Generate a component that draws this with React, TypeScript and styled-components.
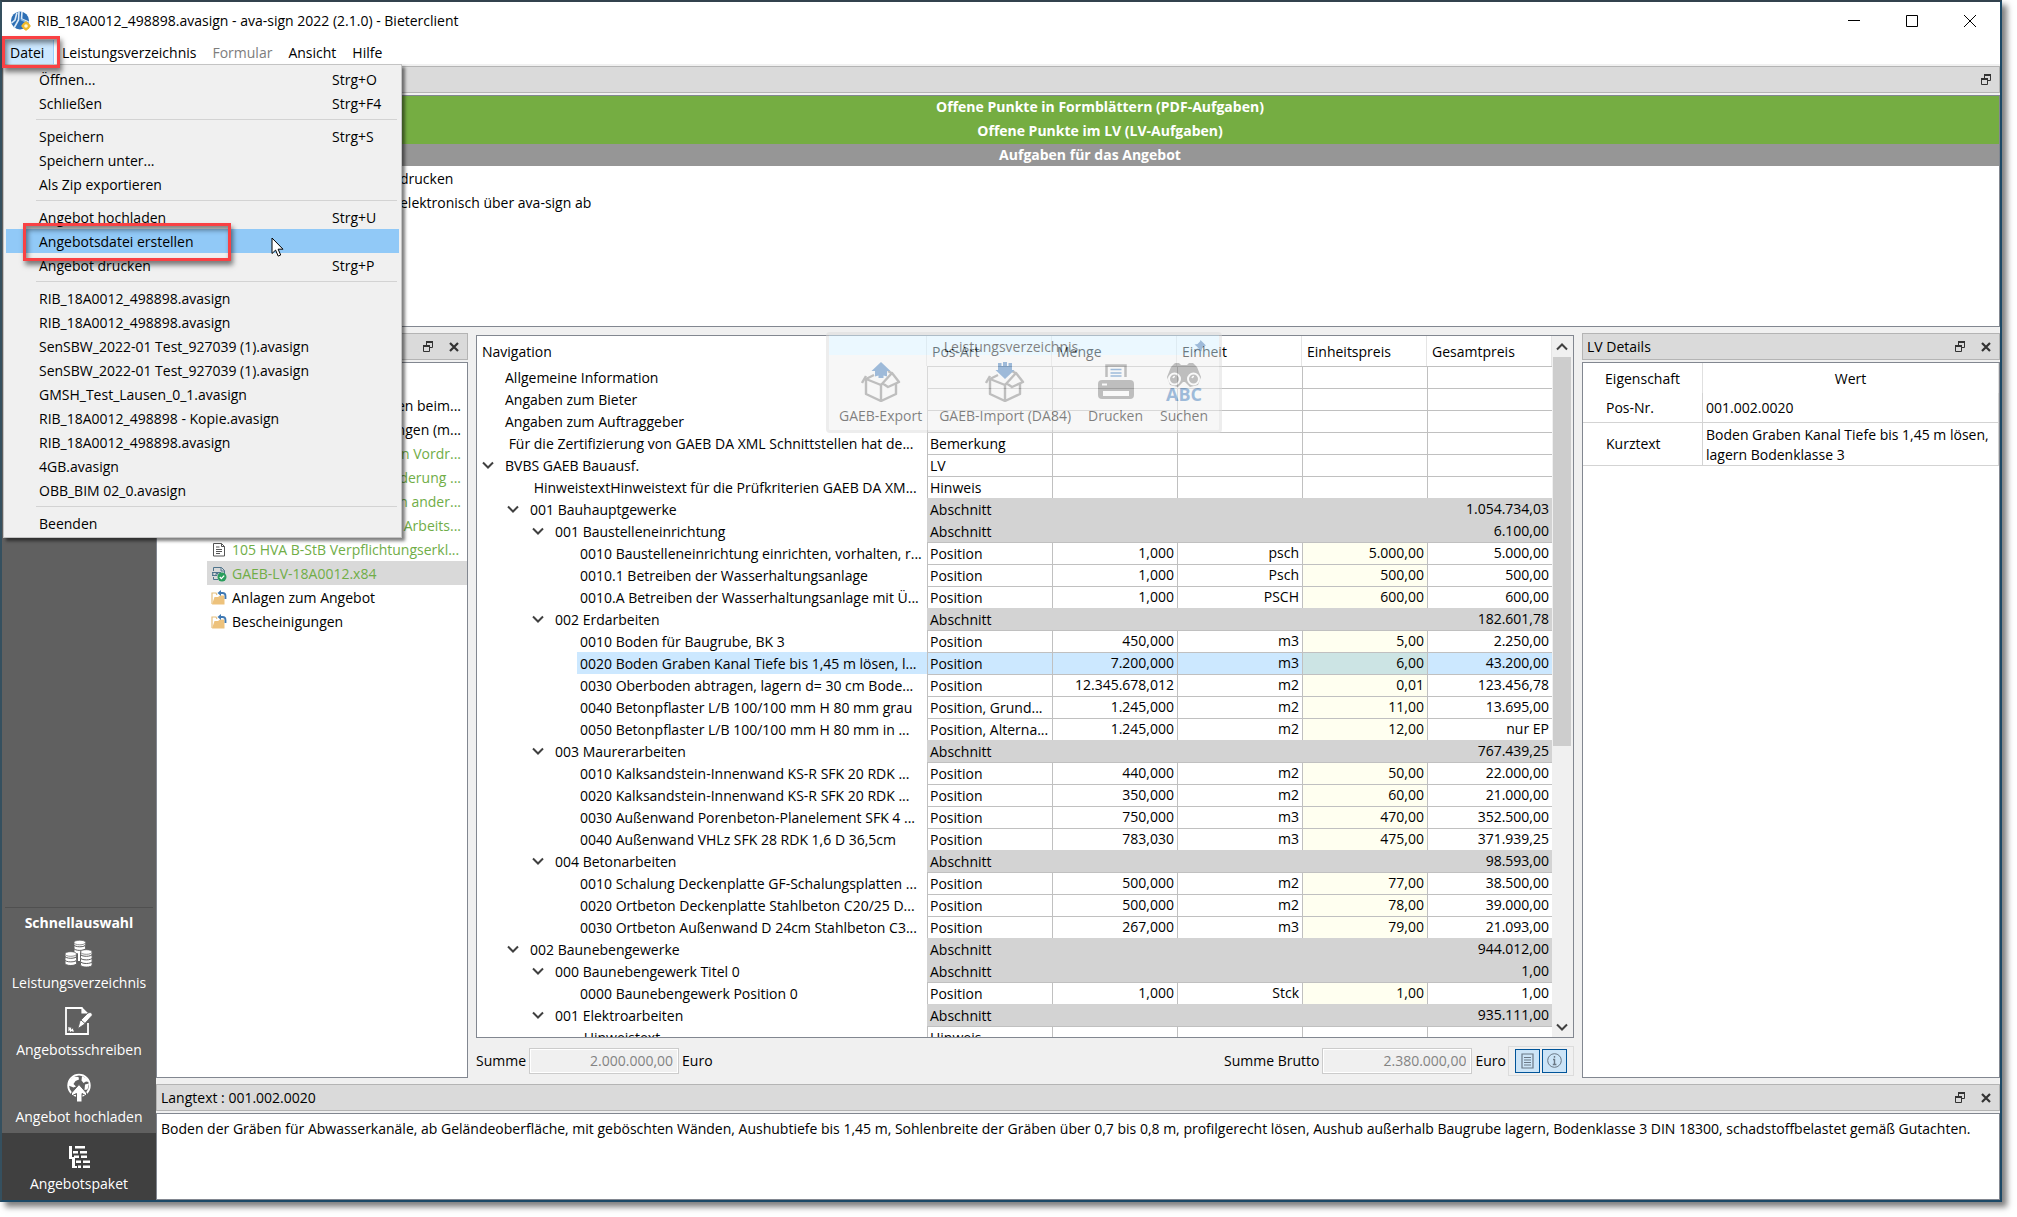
import React from "react";
import styled, { createGlobalStyle, css } from "styled-components";

const Global = createGlobalStyle`
  *, *::before, *::after { box-sizing: border-box; }
  body {
    margin: 0;
    background: #fff;
    color: #000;
    font: 14px/20px "Open Sans", "Noto Sans", sans-serif;
  }
  button, input, table { font: inherit; color: inherit; }
  button { margin: 0; padding: 0; border: 0; background: none; }
  ul { margin: 0; padding: 0; list-style: none; }
`;

/* ---------- window ---------- */

const Stage = styled.div`
  padding: 0 15px 15px 0;
  height: 100vh;
  min-height: 800px;
`;

const Window = styled.main`
  display: flex;
  flex-direction: column;
  height: 100%;
  background: #fff;
  border: 2px solid #1c4966;
  border-top-color: #33424d;
  border-left-color: #35505f;
  box-shadow: 5px 5px 6px rgba(0, 0, 0, 0.5);
`;

const TitleBar = styled.header`
  display: flex;
  align-items: center;
  flex: none;
  height: 38px;
  padding: 0 4px 0 9px;
  gap: 6px;
`;

const WindowTitle = styled.h1`
  flex: 1;
  margin: 0;
  font-size: 14px;
  font-weight: 400;
`;

const WindowButton = styled.button`
  display: grid;
  place-items: center;
  width: 52px;
  height: 36px;
`;

/* ---------- menu bar ---------- */

const MenuBar = styled.nav`
  display: flex;
  flex: none;
  height: 24px;
`;

const MenuHolder = styled.div`
  position: relative;
`;

const MenuButton = styled.button<{ $open?: boolean }>`
  height: 24px;
  min-width: 52px;
  padding: 2px 8px 0;
  text-align: left;
  white-space: nowrap;
  &:disabled { color: #7d7d7d; }
  ${(p) => p.$open && css`
    background: #cce8ff;
    box-shadow: inset -1px 0 #99d1ff;
  `}
`;

const Marker = styled.span<{ $wide?: boolean }>`
  position: absolute;
  z-index: 3;
  inset: ${(p) => (p.$wide ? "-6px auto -8px 17px" : "-4px -6px -4px 0")};
  width: ${(p) => (p.$wide ? "208px" : "auto")};
  border: 3px solid #f94144;
  box-shadow: 2px 4px 5px rgba(0, 0, 0, 0.5), inset 2px 4px 5px rgba(0, 0, 0, 0.45);
  pointer-events: none;
`;

const Menu = styled.ul`
  position: absolute;
  z-index: 2;
  top: 24px;
  left: 1px;
  width: 399px;
  padding: 2px;
  background: #f0f0f0;
  border: 1px solid #c4c4c4;
  box-shadow: 3px 3px 3px rgba(0, 0, 0, 0.5);
`;

const MenuRow = styled.li<{ $separator?: boolean }>`
  position: relative;
  ${(p) => p.$separator && css`
    height: 1px;
    margin: 4px 2px 4px 30px;
    background: #d3d3d3;
  `}
`;

const MenuItem = styled.button<{ $active?: boolean }>`
  display: grid;
  grid-template-columns: 1fr 67px;
  width: 393px;
  height: 24px;
  padding: 2px 0 0 33px;
  align-items: center;
  text-align: left;
  background: ${(p) => (p.$active ? "#91c9f7" : "none")};
`;

const Pointer = styled.svg`
  position: absolute;
  z-index: 4;
  left: 265px;
  top: 8px;
`;

/* ---------- sidebar ---------- */

const Body = styled.div`
  display: flex;
  flex: 1;
  min-height: 0;
`;

const Sidebar = styled.aside`
  display: flex;
  flex-direction: column;
  justify-content: flex-end;
  flex: none;
  width: 154px;
  background: #606060;
  color: #fff;
  text-align: center;
`;

const QuickTitle = styled.h2`
  margin: 0 3px;
  padding: 5px 0 0;
  height: 25px;
  border-top: 1px solid #505050;
  font-size: 14px;
  font-weight: 700;
  line-height: 20px;
`;

const QuickButton = styled.button<{ $active?: boolean }>`
  display: flex;
  flex-direction: column;
  align-items: center;
  justify-content: flex-end;
  height: 67px;
  padding-bottom: 6px;
  gap: 5px;
  background: ${(p) => (p.$active ? "#404040" : "none")};
`;

/* ---------- docks ---------- */

const Workspace = styled.div`
  display: flex;
  flex-direction: column;
  flex: 1;
  min-width: 0;
  padding-top: 2px;
  gap: 6px;
  background: #f0f0f0;
`;

const Columns = styled.div`
  display: flex;
  flex: 1;
  gap: 8px;
  min-height: 0;
`;

const Dock = styled.section<{ $width?: string }>`
  display: flex;
  flex-direction: column;
  flex: none;
  width: ${(p) => p.$width ?? "auto"};
  gap: 2px;
`;

const DockHeader = styled.header`
  display: flex;
  align-items: center;
  height: 27px;
  flex: none;
  padding: 0 8px 0 4px;
  gap: 16px;
  background: #dadada;
  border: 1px solid #b4b4b4;
`;

const DockTitle = styled.h2`
  flex: 1;
  margin: 0;
  padding-top: 1px;
  font-size: 14px;
  font-weight: 400;
`;

const IconButton = styled.button`
  display: grid;
  place-items: center;
  width: 10px;
  height: 12px;
`;

const Panel = styled.div<{ $height?: string }>`
  flex: ${(p) => (p.$height ? "none" : "1")};
  height: ${(p) => p.$height ?? "auto"};
  min-height: 0;
  overflow: hidden;
  background: #fff;
  border: 1px solid #828790;
`;

const TaskHeading = styled.h3<{ $closed?: boolean }>`
  margin: 0;
  padding-left: ${(p) => (p.$closed ? "24px" : "44px")};
  height: ${(p) => (p.$closed ? "22px" : "24px")};
  line-height: 22px;
  font-size: 14px;
  font-weight: 700;
  text-align: center;
  color: #fff;
  background: ${(p) => (p.$closed ? "#969696" : "#75ad42")};
`;

const Task = styled.p`
  display: grid;
  grid-template-columns: 239px 1fr;
  column-gap: 4px;
  margin: 0;
  line-height: 24px;
  & > :first-child { text-align: right; }
`;

const TaskList = styled.div`
  padding-top: 1px;
`;

/* ---------- package tree ---------- */

const Tree = styled.ul`
  padding-top: 30px;
`;

const TreeRow = styled.li<{ $tone?: "green"; $selected?: boolean; $tail?: boolean }>`
  display: flex;
  align-items: center;
  height: 24px;
  margin-left: 50px;
  padding: 1px 6px 0 4px;
  gap: 5px;
  justify-content: ${(p) => (p.$tail ? "flex-end" : "flex-start")};
  white-space: nowrap;
  color: ${(p) => (p.$tone === "green" ? "#70ad47" : "#000")};
  background: ${(p) => (p.$selected ? "#d9d9d9" : "none")};
`;

/* ---------- bill of quantities ---------- */

const Center = styled.section`
  display: flex;
  flex-direction: column;
  flex: 1;
  min-width: 0;
  padding-top: 2px;
  position: relative;
`;

const GridFrame = styled.div`
  display: flex;
  flex: 1;
  min-height: 0;
  overflow: hidden;
  background: #fff;
  border: 1px solid #828790;
`;

const GridScroll = styled.div`
  flex: 1;
  min-width: 0;
  overflow: hidden;
`;

const Grid = styled.table`
  width: 100%;
  table-layout: fixed;
  border-collapse: separate;
  border-spacing: 0;
`;

const Col = styled.col<{ $fixed?: boolean }>`
  width: ${(p) => (p.$fixed ? "125px" : "auto")};
`;

const HeadCell = styled.th`
  height: 30px;
  padding: 2px 5px 0;
  font-weight: 400;
  text-align: left;
  border-right: 1px solid #e5e5e5;
`;

type Kind = "plain" | "section" | "position" | "selected";

const NavCell = styled.td<{ $level: number }>`
  height: 22px;
  padding: 0 0 0 ${(p) => p.$level * 25}px;
  white-space: nowrap;
`;

const NavContent = styled.div<{ $selected?: boolean }>`
  display: flex;
  & > :last-child {
    flex: 1;
    height: 22px;
    margin-left: 3px;
    padding: 2px 0 0 3px;
    overflow: hidden;
    white-space: pre;
    background: ${(p) => (p.$selected ? "#cce8ff" : "none")};
  }
`;

const Twisty = styled.button`
  display: grid;
  place-items: center;
  flex: none;
  width: 22px;
  height: 22px;
`;

const cellLook = {
  plain: css`border-top: 1px solid #c0c0c0; border-left: 1px solid #c0c0c0;`,
  position: css`border-top: 1px solid #c0c0c0; border-left: 1px solid #c0c0c0;`,
  selected: css`border-top: 1px solid #c0c0c0; border-left: 1px solid #c0c0c0; background: #cce8ff;`,
  section: css`border-top: 1px solid #d3d3d3; border-left: 1px solid #d3d3d3; background: #d3d3d3;`,
};

const Cell = styled.td<{ $kind: Kind; $number?: boolean; $input?: boolean }>`
  height: 22px;
  padding: 0 ${(p) => (p.$number ? "3px" : "2px")} 0 2px;
  line-height: 20px;
  padding-top: ${(p) => (p.$number ? "0" : "1px")};
  vertical-align: top;
  white-space: nowrap;
  text-align: ${(p) => (p.$number ? "right" : "left")};
  ${(p) => cellLook[p.$kind]}
  ${(p) => p.$input && p.$kind === "position" && css`background: #fffff0;`}
  ${(p) => p.$input && p.$kind === "selected" && css`background: #cce4e4;`}
`;

const ScrollBar = styled.div`
  display: flex;
  flex-direction: column;
  flex: none;
  width: 21px;
  padding: 0 2px 0 1px;
  background: #f0f0f0;
`;

const ScrollButton = styled.button`
  display: grid;
  place-items: center;
  height: 21px;
`;

const ScrollTrack = styled.div`
  flex: 1;
`;

const ScrollThumb = styled.div`
  height: 59%;
  background: #cdcdcd;
`;

const Sums = styled.div`
  display: flex;
  align-items: center;
  flex: none;
  height: 40px;
  padding-top: 5px;
`;

const SumLabel = styled.label`
  margin-right: 3px;
`;

const SumField = styled.input`
  width: 150px;
  height: 26px;
  margin-right: 3px;
  padding: 0 5px;
  text-align: right;
  background: #f0f0f0;
  border: 1px solid #ccc;
  box-shadow: inset 0 0 0 1px #fff;
  &:disabled { color: #838383; }
`;

const Spacer = styled.span`
  flex: 1;
`;

const ToggleGroup = styled.div`
  display: flex;
  gap: 2px;
  margin-left: 2px;
  padding: 2px 6px;
  border: 1px solid #dcdcdc;
`;

const Toggle = styled.button`
  display: grid;
  place-items: center;
  width: 25px;
  height: 24px;
  background: #cce4f7;
  border: 1px solid #005499;
`;

/* ---------- fading tool palette ---------- */

const Palette = styled.div`
  position: absolute;
  top: -1px;
  left: 350px;
  width: 396px;
  height: 101px;
  opacity: 0.5;
  background: #f0f0f0;
  border: 3px solid #dcdcdc;
  border-radius: 4px;
`;

const PaletteTitle = styled.div`
  display: grid;
  grid-template-columns: 1fr 20px;
  align-items: center;
  height: 20px;
  padding-right: 6px;
  text-align: center;
  background: #d8f2ff;
  & > :first-child { padding-top: 2px; }
`;

const PaletteTools = styled.div`
  display: flex;
  gap: 17px;
  padding: 7px 10px 0;
`;

const Tool = styled.button`
  display: flex;
  flex-direction: column;
  align-items: center;
  gap: 4px;
  white-space: nowrap;
`;

/* ---------- details ---------- */

const Details = styled.table`
  width: 100%;
  table-layout: fixed;
  border-collapse: separate;
  border-spacing: 0;
  & th { height: 30px; padding: 2px 0 0; font-weight: 400; border-right: 1px solid #e0e0e0; }
  & td {
    height: 30px;
    padding: 0 3px;
    border-right: 1px solid #d3d3d3;
    border-bottom: 1px solid #d3d3d3;
  }
  & td:first-child { padding-left: 23px; }
`;

const DetailCol = styled.col<{ $name?: boolean }>`
  width: ${(p) => (p.$name ? "120px" : "auto")};
`;

const ShortText = styled.div`
  padding: 2px 0 0;
`;

const LongText = styled.p`
  margin: 0;
  padding: 5px 4px;
`;

/* ---------- icons ---------- */

const FloatIcon = () => (
  <svg width="10" height="11" viewBox="0 0 10 11" fill="none" stroke="#333">
    <path d="M3.5 4V1.5h6v5H7" />
    <path d="M3 1h7" strokeWidth="2" />
    <path d="M.5 4.5h6v6h-6z" fill="#dadada" />
    <path d="M0 5h7" strokeWidth="2" />
  </svg>
);

const CrossIcon = () => (
  <svg width="10" height="10" viewBox="0 0 10 10" stroke="#333" strokeWidth="2.2">
    <path d="M1 1l8 8M9 1L1 9" />
  </svg>
);

const Chevron = ({ up }: { up?: boolean }) => (
  <svg width="12" height="8" viewBox="0 0 12 8" fill="none" stroke="#404040" strokeWidth="2">
    <path d={up ? "M1 6.5L6 1.5l5 5" : "M1 1.5l5 5 5-5"} />
  </svg>
);

const AppIcon = () => (
  <svg width="20" height="20" viewBox="0 0 20 20">
    <circle cx="9" cy="9.5" r="9" fill="#2d6fb5" />
    <path d="M6 1.5L4 9l-3.400 3M8 .5L7.500 9 3 17M11 .8L10.500 8l7 3" fill="none" stroke="#dceaf7" strokeWidth="1.600" />
    <path d="M10 8.500l6 3" stroke="#7fb2e0" strokeWidth="1.500" />
    <path d="M15 10l5 5-5 5-5-5z" fill="#f0b92a" />
    <circle cx="15" cy="15" r="3.800" fill="#f0b92a" />
    <circle cx="15" cy="15" r="1.800" fill="#fff6cf" />
  </svg>
);

const Coin = ({ x, y, n }: { x: number; y: number; n: number }) => (
  <g transform={`translate(${x} ${y})`}>
    {Array.from({ length: n }, (_, i) => n - 1 - i).map((i) => (
      <path
        key={i}
        d={`M0 ${2 + i * 3.6}v2.600c0 1.300 2.500 2.200 5.800 2.200s5.800-.9 5.800-2.200v-2.600z`}
        fill="#fff"
        stroke="#606060"
        strokeWidth="1"
      />
    ))}
    <ellipse cx="5.800" cy="2.500" rx="5.800" ry="2.300" fill="#fff" stroke="#606060" strokeWidth=".7" />
  </g>
);

const CoinsIcon = () => (
  <svg width="28" height="28" viewBox="0 0 28 28">
    <Coin x={9} y={0} n={3} />
    <path d="M13 12h2v9h-2z" fill="#fff" />
    <Coin x={0} y={11.5} n={3} />
    <Coin x={15.5} y={9.5} n={4} />
  </svg>
);

const LetterIcon = () => (
  <svg width="28" height="28" viewBox="0 0 28 28" fill="none" stroke="#fff" strokeWidth="1.800">
    <path d="M17.500 1H1v26h22V16" />
    <path d="M17 1v5h5z" fill="#fff" strokeWidth="1.200" />
    <path d="M25 5.500a2.200 2.200 0 0 1 2 3l-8 9-6 4 2-7.500 8-8z" fill="#fff" stroke="#606060" strokeWidth=".8" />
    <path d="M16 13l4 3.500" stroke="#606060" strokeWidth="1" />
    <path d="M4 20v3l1.500-1.500V24l2-1.500V24H9" strokeWidth="1.200" />
  </svg>
);

const GlobeIcon = () => (
  <svg width="28" height="29" viewBox="0 0 28 29">
    <circle cx="14" cy="12.500" r="10.800" fill="none" stroke="#fff" strokeWidth="1.800" />
    <path d="M4 8l5-4.500 4.500.5.500 2.500-3.500 1.500-2 3 2.500 2.500-2.500 1-5-2zM17 3l4.500 2.500L24 9l-3-.5-2.500 1.500-2-2.500zM20 11.500l4-1-1.500 6-3 .5z" fill="#fff" />
    <path d="M14 11.500l7.500 8.500v3l-4.500-2.500V29h-5.500v-8.500l-5 2.500V20z" fill="#fff" stroke="#606060" strokeWidth="1" />
  </svg>
);

const PackageIcon = () => (
  <svg width="24" height="24" viewBox="0 0 24 24" fill="#fff">
    <path d="M2 1h3v11h3v9h2v2H5V14H2zM8 1h10v2.500H8zM6 6h5v2.500H6zM13 6h7v2.500h-7zM7 10.500h5V13H7zM14 10.500h6V13h-6zM9 15.500h5V18H9zM16 15.500h7V18h-7zM11 20.500h3V23h-3zM16 20.500h7V23h-7z" />
  </svg>
);

const DocIcon = () => (
  <svg width="16" height="16" viewBox="0 0 16 16" fill="none" stroke="#555">
    <path d="M2.500 1.500h8l3 3v9.500h-11zM10.500 1.500v3h3M5 5h3.500M5 7.500h6M5 9.500h6M5 11.500h4" />
  </svg>
);

const GaebIcon = () => (
  <svg width="16" height="16" viewBox="0 0 16 16" fill="none" stroke="#4e748c">
    <path d="M2.500 5V1.500h8l3 3V8M10 1.500V5h3.500M2.500 11v2.500H7M1 6.500h9M1 9.500h5" />
    <path d="M3 6.500a1.500 1.500 0 1 0 0 3M5 9.500v-2h2v2M9 6.500v3" />
    <circle cx="11" cy="11" r="4.500" fill="#2a9d5c" stroke="none" />
    <path d="M8.800 11l1.600 1.600 2.800-3" stroke="#fff" strokeWidth="1.300" />
  </svg>
);

const FolderIcon = () => (
  <svg width="16" height="16" viewBox="0 0 16 16">
    <path d="M1 14V3h4l1 2" fill="none" stroke="#e5bf7d" strokeWidth="1.200" />
    <path d="M1 14.500L3.500 7H7l2-1.500h4.500v9z" fill="#edc27c" />
    <path d="M9 3h2.500a3 3 0 0 1 3 3v3" fill="none" stroke="#3e78b3" strokeWidth="1.800" />
    <path d="M10 0v6L6.500 3z" fill="#3e78b3" />
  </svg>
);

const BoxIcon = ({ down }: { down?: boolean }) => (
  <svg width="40" height="40" viewBox="0 0 40 40" fill="none" stroke="#7f7f7f" strokeWidth="2.400" strokeLinejoin="round">
    <path d="M13 13L5 17v15l15 7 15-7V21M20 39V22" />
    <path d="M5 17l15 6 11-12 7 9-11 5-6-4M5 14l-4 7M27 9l5 3" />
    {down ? (
      <path d="M13 1h3.500v3h1.500V0h4v4h1.500V1H27v7h2.500L20 17 10.500 8H13z" fill="#3f78b5" stroke="none" />
    ) : (
      <path d="M20 0l9.500 9H26v5.500l-3.500-1V16h-5v-2.500l-3.500 1V9h-3.500z" fill="#3f78b5" stroke="none" />
    )}
  </svg>
);

const PrinterIcon = () => (
  <svg width="40" height="40" viewBox="0 0 40 40">
    <path d="M10.500 15V3.500h19V15" fill="none" stroke="#7f7f7f" strokeWidth="2.500" />
    <path d="M14.500 7.500h11M14.500 11h11M14.500 14h11" stroke="#3f78b5" strokeWidth="1.500" />
    <path d="M6 18h28a4 4 0 0 1 4 4v11a4 4 0 0 1-4 4H6a4 4 0 0 1-4-4V22a4 4 0 0 1 4-4z" fill="#7f7f7f" />
    <path d="M7 29h26v5H7z" fill="#f4f4f4" />
    <path d="M6 22.500h5" stroke="#f4f4f4" strokeWidth="2" />
  </svg>
);

const SearchIcon = () => (
  <svg width="40" height="40" viewBox="0 0 40 40">
    <path d="M11 1h4l2 2h6l2-2h4l4 4 4 10-3 8-8 2-5-5h-2l-5 5-8-2-3-8L7 5z" fill="#7f7f7f" />
    <circle cx="10.500" cy="17" r="5.500" fill="#7f7f7f" stroke="#f4f4f4" strokeWidth="2" />
    <circle cx="29.500" cy="17" r="5.500" fill="#7f7f7f" stroke="#f4f4f4" strokeWidth="2" />
    <path d="M9 16a2 2 0 0 1 2-1.500M28 16a2 2 0 0 1 2-1.500" stroke="#f4f4f4" strokeWidth="1.500" fill="none" />
    <text x="20" y="39" textAnchor="middle" fontFamily="Open Sans, sans-serif" fontWeight="700" fontSize="18" fill="#3f78b5">
      ABC
    </text>
  </svg>
);

const PinIcon = () => (
  <svg width="13" height="13" viewBox="0 0 13 13" fill="#3f78b5">
    <path d="M7.500 0L13 5.500l-1.500.5-2.500 2.500-.5 3L5 8 1 12.500l-.5-.5L5 7.500 1.500 4.500l3-.5L7 1.500z" />
  </svg>
);

const SheetIcon = () => (
  <svg width="13" height="16" viewBox="0 0 13 16" fill="none" stroke="#6b7885">
    <path d="M1 1h11v14H1zM3 4.500h7M3 7h7M3 9.500h7M3 12h7" strokeWidth="1.200" />
  </svg>
);

const InfoIcon = () => (
  <svg width="15" height="15" viewBox="0 0 15 15" fill="none" stroke="#6b7885">
    <circle cx="7.500" cy="7.500" r="6.800" />
    <path d="M7.500 3v1.800M6 6.500h1.500V11M5.800 11.500h3.600" strokeWidth="1.400" />
  </svg>
);

/* ---------- data ---------- */

type MenuEntry = { text: string; keys?: string; active?: boolean } | null;

const fileMenu: MenuEntry[] = [
  { text: "Öffnen...", keys: "Strg+O" },
  { text: "Schließen", keys: "Strg+F4" },
  null,
  { text: "Speichern", keys: "Strg+S" },
  { text: "Speichern unter..." },
  { text: "Als Zip exportieren" },
  null,
  { text: "Angebot hochladen", keys: "Strg+U" },
  { text: "Angebotsdatei erstellen", active: true },
  { text: "Angebot drucken", keys: "Strg+P" },
  null,
  { text: "RIB_18A0012_498898.avasign" },
  { text: "RIB_18A0012_498898.avasign" },
  { text: "SenSBW_2022-01 Test_927039 (1).avasign" },
  { text: "SenSBW_2022-01 Test_927039 (1).avasign" },
  { text: "GMSH_Test_Lausen_0_1.avasign" },
  { text: "RIB_18A0012_498898 - Kopie.avasign" },
  { text: "RIB_18A0012_498898.avasign" },
  { text: "4GB.avasign" },
  { text: "OBB_BIM 02_0.avasign" },
  null,
  { text: "Beenden" },
];

type Row = {
  level: number;
  text: string;
  type?: string;
  open?: boolean;
  kind?: Kind;
  amount?: string;
  unit?: string;
  price?: string;
  total?: string;
};

const sec = (level: number, text: string, total: string): Row => ({
  level, text, total, type: "Abschnitt", open: true, kind: "section",
});

const pos = (text: string, amount: string, unit: string, price: string, total: string, type = "Position"): Row => ({
  level: 3, text, amount, unit, price, total, type, kind: "position",
});

const rows: Row[] = [
  { level: 0, text: "Allgemeine Information" },
  { level: 0, text: "Angaben zum Bieter" },
  { level: 0, text: "Angaben zum Auftraggeber" },
  { level: 0, text: " Für die Zertifizierung von GAEB DA XML Schnittstellen hat de...", type: "Bemerkung" },
  { level: 0, text: "BVBS GAEB Bauausf.", type: "LV", open: true },
  { level: 1, text: " HinweistextHinweistext für die Prüfkriterien GAEB DA XM...", type: "Hinweis" },
  sec(1, "001 Bauhauptgewerke", "1.054.734,03"),
  sec(2, "001 Baustelleneinrichtung", "6.100,00"),
  pos("0010 Baustelleneinrichtung einrichten, vorhalten, r...", "1,000", "psch", "5.000,00", "5.000,00"),
  pos("0010.1 Betreiben der Wasserhaltungsanlage", "1,000", "Psch", "500,00", "500,00"),
  pos("0010.A Betreiben der Wasserhaltungsanlage mit Ü...", "1,000", "PSCH", "600,00", "600,00"),
  sec(2, "002 Erdarbeiten", "182.601,78"),
  pos("0010 Boden für Baugrube, BK 3", "450,000", "m3", "5,00", "2.250,00"),
  { ...pos("0020 Boden Graben Kanal Tiefe bis 1,45 m lösen, l...", "7.200,000", "m3", "6,00", "43.200,00"), kind: "selected" },
  pos("0030 Oberboden abtragen, lagern d= 30 cm Bode...", "12.345.678,012", "m2", "0,01", "123.456,78"),
  pos("0040 Betonpflaster L/B 100/100 mm H 80 mm grau", "1.245,000", "m2", "11,00", "13.695,00", "Position, Grund..."),
  pos("0050 Betonpflaster L/B 100/100 mm H 80 mm in ...", "1.245,000", "m2", "12,00", "nur EP", "Position, Alterna..."),
  sec(2, "003 Maurerarbeiten", "767.439,25"),
  pos("0010 Kalksandstein-Innenwand KS-R SFK 20 RDK ...", "440,000", "m2", "50,00", "22.000,00"),
  pos("0020 Kalksandstein-Innenwand KS-R SFK 20 RDK ...", "350,000", "m2", "60,00", "21.000,00"),
  pos("0030 Außenwand Porenbeton-Planelement SFK 4 ...", "750,000", "m3", "470,00", "352.500,00"),
  pos("0040 Außenwand VHLz SFK 28 RDK 1,6 D 36,5cm", "783,030", "m3", "475,00", "371.939,25"),
  sec(2, "004 Betonarbeiten", "98.593,00"),
  pos("0010 Schalung Deckenplatte GF-Schalungsplatten ...", "500,000", "m2", "77,00", "38.500,00"),
  pos("0020 Ortbeton Deckenplatte Stahlbeton C20/25 D...", "500,000", "m2", "78,00", "39.000,00"),
  pos("0030 Ortbeton Außenwand D 24cm Stahlbeton C3...", "267,000", "m3", "79,00", "21.093,00"),
  sec(1, "002 Baunebengewerke", "944.012,00"),
  sec(2, "000 Baunebengewerk Titel 0", "1,00"),
  pos("0000 Baunebengewerk Position 0", "1,000", "Stck", "1,00", "1,00"),
  sec(2, "001 Elektroarbeiten", "935.111,00"),
  { level: 3, text: " Hinweistext", type: "Hinweis" },
];

const DockTools = ({ closable = true }: { closable?: boolean }) => (
  <>
    <IconButton aria-label="Lösen"><FloatIcon /></IconButton>
    {closable && <IconButton aria-label="Schließen"><CrossIcon /></IconButton>}
  </>
);

const GridRow = ({ row }: { row: Row }) => {
  const kind = row.kind ?? "plain";
  return (
    <tr>
      <NavCell $level={row.level}>
        <NavContent $selected={kind === "selected"}>
          <Twisty as={row.open ? "button" : "span"} aria-label={row.open ? "Zuklappen" : undefined}>
            {row.open && <Chevron />}
          </Twisty>
          <span>{row.text}</span>
        </NavContent>
      </NavCell>
      <Cell $kind={kind}>{row.type}</Cell>
      <Cell $kind={kind} $number>{row.amount}</Cell>
      <Cell $kind={kind} $number>{row.unit}</Cell>
      <Cell $kind={kind} $number $input>{row.price}</Cell>
      <Cell $kind={kind} $number>{row.total}</Cell>
    </tr>
  );
};

export default function App() {
  return (
    <Stage>
      <Global />
      <Window>
        <TitleBar>
          <AppIcon />
          <WindowTitle>RIB_18A0012_498898.avasign - ava-sign 2022 (2.1.0) - Bieterclient</WindowTitle>
          <WindowButton aria-label="Minimieren">
            <svg width="12" height="12" stroke="#000"><path d="M0 5.500h12" /></svg>
          </WindowButton>
          <WindowButton aria-label="Maximieren">
            <svg width="12" height="12" stroke="#000" fill="none"><path d="M.5.5h11v11H.5z" /></svg>
          </WindowButton>
          <WindowButton aria-label="Beenden">
            <svg width="12" height="12" stroke="#000"><path d="M0 0l12 12M12 0L0 12" /></svg>
          </WindowButton>
        </TitleBar>

        <MenuBar>
          <MenuHolder>
            <MenuButton $open>Datei</MenuButton>
            <Marker />
            <Menu>
              {fileMenu.map((m, i) =>
                m === null ? (
                  <MenuRow key={i} $separator />
                ) : (
                  <MenuRow key={i}>
                    <MenuItem $active={m.active}>
                      <span>{m.text}</span>
                      <span>{m.keys}</span>
                    </MenuItem>
                    {m.active && (
                      <>
                        <Marker $wide />
                        <Pointer width="13" height="21" viewBox="0 0 13 21">
                          <path d="M1 1v15.500l3.600-3.400 2.600 6 2.500-1.100-2.600-5.800H12z" fill="#fff" stroke="#000" />
                        </Pointer>
                      </>
                    )}
                  </MenuRow>
                ),
              )}
            </Menu>
          </MenuHolder>
          <MenuButton>Leistungsverzeichnis</MenuButton>
          <MenuButton disabled>Formular</MenuButton>
          <MenuButton>Ansicht</MenuButton>
          <MenuButton>Hilfe</MenuButton>
        </MenuBar>

        <Body>
          <Sidebar>
            <QuickTitle>Schnellauswahl</QuickTitle>
            <QuickButton><CoinsIcon />Leistungsverzeichnis</QuickButton>
            <QuickButton><LetterIcon />Angebotsschreiben</QuickButton>
            <QuickButton><GlobeIcon />Angebot hochladen</QuickButton>
            <QuickButton $active><PackageIcon />Angebotspaket</QuickButton>
          </Sidebar>

          <Workspace>
            <Dock>
              <DockHeader>
                <DockTitle />
                <DockTools closable={false} />
              </DockHeader>
              <Panel $height="232px">
                <TaskHeading>Offene Punkte in Formblättern (PDF-Aufgaben)</TaskHeading>
                <TaskHeading>Offene Punkte im LV (LV-Aufgaben)</TaskHeading>
                <TaskHeading $closed>Aufgaben für das Angebot</TaskHeading>
                <TaskList>
                  <Task><span>Angebot</span><span>drucken</span></Task>
                  <Task><span>Angebot</span><span>elektronisch über ava-sign ab</span></Task>
                </TaskList>
              </Panel>
            </Dock>

            <Columns>
              <Dock $width="312px">
                <DockHeader>
                  <DockTitle />
                  <DockTools />
                </DockHeader>
                <Panel>
                  <Tree>
                    <TreeRow $tail>Hinweise zum Vorgehen beim...</TreeRow>
                    <TreeRow $tail>Vertragsbedingungen (m...</TreeRow>
                    <TreeRow $tail $tone="green">Angaben in Vordr...</TreeRow>
                    <TreeRow $tail $tone="green">Preisaufgliederung ...</TreeRow>
                    <TreeRow $tail $tone="green">Leistungen ander...</TreeRow>
                    <TreeRow $tail $tone="green">Bieter- und Arbeits...</TreeRow>
                    <TreeRow $tone="green"><DocIcon />105 HVA B-StB Verpflichtungserkl...</TreeRow>
                    <TreeRow $tone="green" $selected><GaebIcon />GAEB-LV-18A0012.x84</TreeRow>
                    <TreeRow><FolderIcon />Anlagen zum Angebot</TreeRow>
                    <TreeRow><FolderIcon />Bescheinigungen</TreeRow>
                  </Tree>
                </Panel>
              </Dock>

              <Center>
                <GridFrame>
                  <GridScroll>
                    <Grid>
                      <colgroup>
                        <Col />
                        <Col $fixed /><Col $fixed /><Col $fixed /><Col $fixed /><Col $fixed />
                      </colgroup>
                      <thead>
                        <tr>
                          {["Navigation", "Pos-Art", "Menge", "Einheit", "Einheitspreis", "Gesamtpreis"].map((h) => (
                            <HeadCell key={h}>{h}</HeadCell>
                          ))}
                        </tr>
                      </thead>
                      <tbody>
                        {rows.map((r, i) => <GridRow key={i} row={r} />)}
                      </tbody>
                    </Grid>
                  </GridScroll>
                  <ScrollBar>
                    <ScrollButton aria-label="Nach oben"><Chevron up /></ScrollButton>
                    <ScrollTrack><ScrollThumb /></ScrollTrack>
                    <ScrollButton aria-label="Nach unten"><Chevron /></ScrollButton>
                  </ScrollBar>
                </GridFrame>

                <Sums>
                  <SumLabel htmlFor="netto">Summe</SumLabel>
                  <SumField id="netto" disabled defaultValue="2.000.000,00" />
                  <span>Euro</span>
                  <Spacer />
                  <SumLabel htmlFor="brutto">Summe Brutto</SumLabel>
                  <SumField id="brutto" disabled defaultValue="2.380.000,00" />
                  <span>Euro</span>
                  <ToggleGroup>
                    <Toggle aria-label="Langtext"><SheetIcon /></Toggle>
                    <Toggle aria-label="Details"><InfoIcon /></Toggle>
                  </ToggleGroup>
                </Sums>

                <Palette>
                  <PaletteTitle><span>Leistungsverzeichnis</span><PinIcon /></PaletteTitle>
                  <PaletteTools>
                    <Tool><BoxIcon />GAEB-Export</Tool>
                    <Tool><BoxIcon down />GAEB-Import (DA84)</Tool>
                    <Tool><PrinterIcon />Drucken</Tool>
                    <Tool><SearchIcon />Suchen</Tool>
                  </PaletteTools>
                </Palette>
              </Center>

              <Dock $width="418px">
                <DockHeader>
                  <DockTitle>LV Details</DockTitle>
                  <DockTools />
                </DockHeader>
                <Panel>
                  <Details>
                    <colgroup><DetailCol $name /><DetailCol /></colgroup>
                    <thead><tr><th>Eigenschaft</th><th>Wert</th></tr></thead>
                    <tbody>
                      <tr><td>Pos-Nr.</td><td>001.002.0020</td></tr>
                      <tr>
                        <td>Kurztext</td>
                        <td><ShortText>Boden Graben Kanal Tiefe bis 1,45 m lösen, lagern Bodenklasse 3</ShortText></td>
                      </tr>
                    </tbody>
                  </Details>
                </Panel>
              </Dock>
            </Columns>

            <Dock>
              <DockHeader>
                <DockTitle>Langtext : 001.002.0020</DockTitle>
                <DockTools />
              </DockHeader>
              <Panel $height="87px">
                <LongText>
                  Boden der Gräben für Abwasserkanäle, ab Geländeoberfläche, mit geböschten Wänden, Aushubtiefe bis 1,45 m,
                  Sohlenbreite der Gräben über 0,7 bis 0,8 m, profilgerecht lösen, Aushub außerhalb Baugrube lagern,
                  Bodenklasse 3 DIN 18300, schadstoffbelastet gemäß Gutachten.
                </LongText>
              </Panel>
            </Dock>
          </Workspace>
        </Body>
      </Window>
    </Stage>
  );
}
